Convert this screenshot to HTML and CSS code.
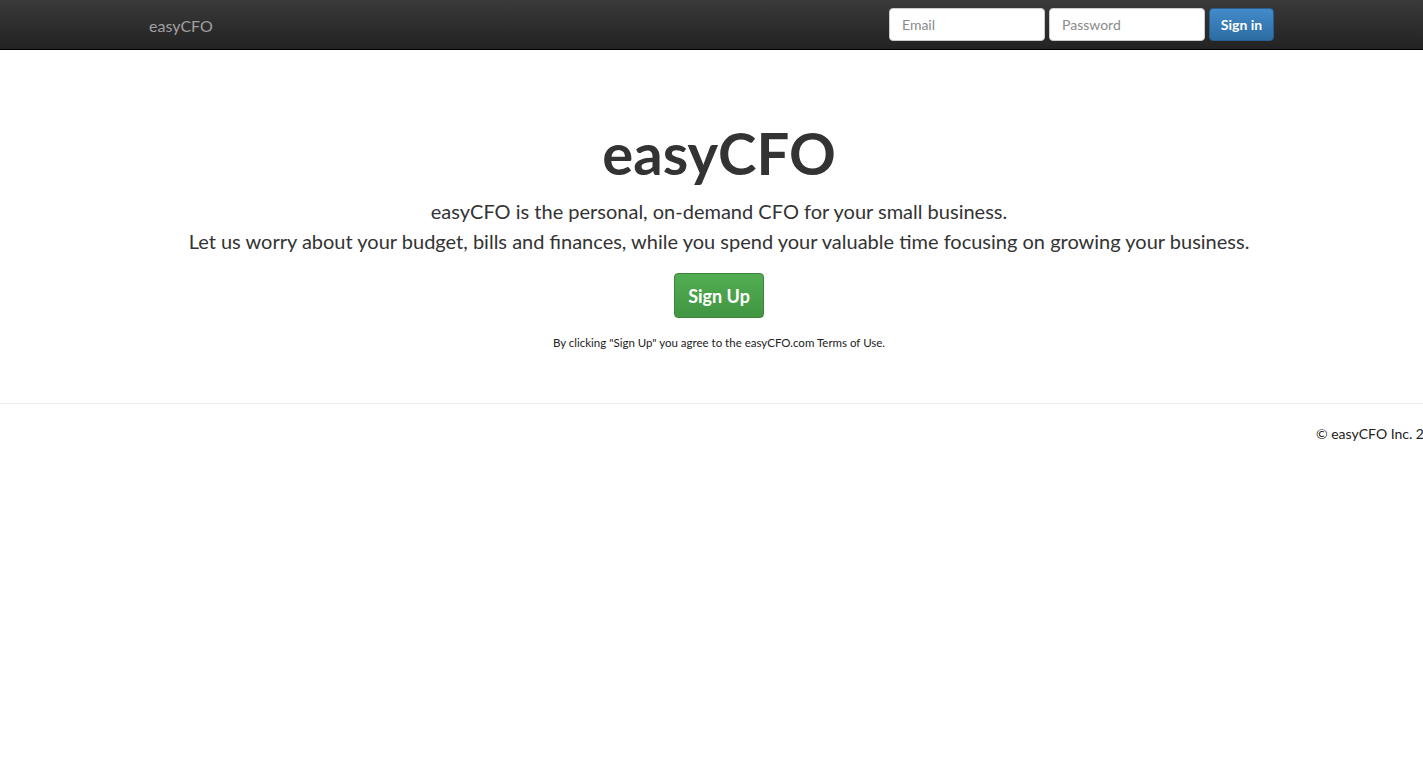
FILE: index.html
```html
<!DOCTYPE html>
<html>
    <head>
        <meta charset="UTF-8">
        <title>easyCFO</title>
        <link rel="stylesheet" href="styles.css">
    </head>
    <body>
        <div class="navbar">
            <div class="navInner">
                <a class="brand" href="#">easyCFO</a>
                <form class="signinForm">
                    <input type="text" class="navInput" placeholder="Email">
                    <input type="password" class="navInput" placeholder="Password">
                    <button type="button" class="btnSignin">Sign in</button>
                </form>
            </div>
        </div>
        <div class="hero">
            <h1 class="heroTitle">easyCFO</h1>
            <p class="heroText">easyCFO is the personal, on-demand CFO for your small business.<br>Let us worry about your budget, bills and finances, while you spend your valuable time focusing on growing your business.</p>
            <button type="button" class="btnSignup">Sign Up</button>
            <p class="terms">By clicking "Sign Up" you agree to the easyCFO.com Terms of Use.</p>
        </div>
        <hr class="divider">
        <div class="footer">
            <p class="copy">&copy; easyCFO Inc. 2013</p>
        </div>
    </body>
</html>
```

FILE: styles.css
```css
html, body {
    overflow: hidden;
}
body {
    margin: 0;
    font-family: Lato, "Open Sans", sans-serif;
    color: #333;
    background-color: white;
}
.navbar {
    height: 50px;
    background: linear-gradient(#3a3a3a, #222);
    border-bottom: 1px solid #000;
    box-sizing: border-box;
}
.navInner {
    display: flex;
    align-items: center;
    height: 100%;
    padding: 0 149px;
}
.brand {
    font-size: 16px;
    color: #a0a0a0;
    text-decoration: none;
    margin-top: 1px;
}
.signinForm {
    margin: 0 0 0 auto;
    display: flex;
    gap: 4px;
}
.navInput {
    width: 156px;
    height: 33px;
    box-sizing: border-box;
    border: 1px solid #ccc;
    border-radius: 4px;
    padding: 0 12px;
    font-family: inherit;
    font-size: 14px;
    color: #555;
}
.navInput::placeholder {
    color: #8a8a8a;
}
.btnSignin {
    width: 65px;
    height: 33px;
    border: 1px solid #285e8e;
    border-radius: 4px;
    background: linear-gradient(#428bca, #2d6ca2);
    color: white;
    font-family: inherit;
    font-weight: bold;
    font-size: 14px;
    padding: 0;
}
.hero {
    text-align: center;
    padding: 74px 0 0 15px;
}
.heroTitle {
    font-size: 58px;
    font-weight: bold;
    line-height: 1;
    margin: 0 0 14px 0;
    color: #333;
}
.heroText {
    font-size: 20px;
    line-height: 30px;
    margin: 0 0 17px 0;
    color: #333;
}
.btnSignup {
    width: 90px;
    height: 45px;
    border: 1px solid #398439;
    border-radius: 4px;
    background: linear-gradient(#52ad52, #419641);
    color: white;
    font-family: inherit;
    font-weight: bold;
    font-size: 18px;
    padding: 0;
}
.terms {
    font-size: 11.5px;
    margin: 18px 0 0 0;
    color: #222;
}
.divider {
    border: 0;
    border-top: 1px solid #eee;
    margin: 54px 0 0 0;
}
.footer {
    padding-left: 1316px;
    white-space: nowrap;
}
.copy {
    font-size: 14px;
    margin: 21px 0 0 0;
    color: #222;
}
```
